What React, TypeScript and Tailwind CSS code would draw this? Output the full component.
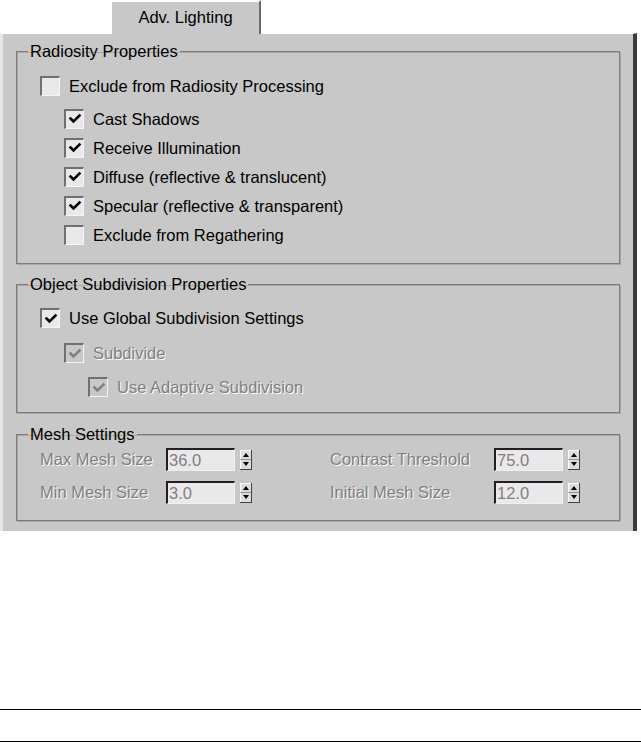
import React from "react";

// Adv. Lighting rollout — 3ds max style object properties tab

const FONT = "font-['Liberation_Sans',Arial,sans-serif]";

function CheckBox({ checked, disabled }: { checked: boolean; disabled?: boolean }) {
  return (
    <div
      className={`flex h-[20px] w-[20px] shrink-0 items-center justify-center border-l-2 border-t-2 border-b border-r border-l-[#707070] border-t-[#707070] border-b-[#f4f4f4] border-r-[#f4f4f4] ${
        disabled ? "bg-[#c8c8c8]" : "bg-[#ebe8eb]"
      }`}
    >
      {checked && (
        <svg width="14" height="14" viewBox="0 0 14 14">
          <polyline
            points="2.5,6.5 5.5,9.5 11.5,3.5"
            fill="none"
            stroke={disabled ? "#808080" : "#000"}
            strokeWidth="2.6"
            strokeLinecap="square"
          />
        </svg>
      )}
    </div>
  );
}

function CheckRow({
  label,
  checked,
  disabled,
  className = "",
}: {
  label: string;
  checked: boolean;
  disabled?: boolean;
  className?: string;
}) {
  return (
    <div className={`flex items-center gap-[9px] ${className}`}>
      <CheckBox checked={checked} disabled={disabled} />
      <span
        className={`whitespace-nowrap leading-[20px] ${
          disabled ? "text-[#808080] [text-shadow:1px_1px_0_#ffffff]" : "text-black"
        }`}
      >
        {label}
      </span>
    </div>
  );
}

function Spinner() {
  return (
    <div className="flex h-[20px] w-[12px] flex-col border-b border-r border-[#404040] bg-[#dcdcdc]">
      <div className="flex flex-1 items-center justify-center border-l border-t border-white">
        <div className="h-0 w-0 border-x-[3px] border-b-[4px] border-x-transparent border-b-black" />
      </div>
      <div className="flex flex-1 items-center justify-center border-l border-t border-white border-t-[#909090]">
        <div className="h-0 w-0 border-x-[3px] border-t-[4px] border-x-transparent border-t-black" />
      </div>
    </div>
  );
}

function NumField({ label, value, labelW }: { label: string; value: string; labelW: string }) {
  return (
    <div className="flex items-center">
      <span
        className={`${labelW} whitespace-nowrap text-[#808080] [text-shadow:1px_1px_0_#ffffff]`}
      >
        {label}
      </span>
      <div className="flex h-[23px] w-[69px] items-center border-l-2 border-t-2 border-b border-r border-l-[#202020] border-t-[#202020] border-b-[#f0f0f0] border-r-[#f0f0f0] bg-[#ebe8eb] pl-[1px] text-[#808080]">
        {value}
      </div>
      <div className="ml-[5px]">
        <Spinner />
      </div>
    </div>
  );
}

function Group({
  title,
  className = "",
  children,
}: {
  title: string;
  className?: string;
  children: React.ReactNode;
}) {
  return (
    <fieldset
      className={`mx-[13px] border border-[#7c7c7c] pl-[23px] shadow-[1px_1px_0_#a8a8a8,inset_1px_1px_0_#a8a8a8] ${className}`}
    >
      <legend className="-ml-[12px] px-[2px] leading-[18px] text-black">{title}</legend>
      {children}
    </fieldset>
  );
}

export default function App() {
  return (
    <div className={`h-[742px] w-[641px] bg-white text-[16.5px] ${FONT}`}>
      {/* tab strip */}
      <div className="flex h-[33px] pl-[110px]">
        <div className="relative z-10 flex h-[34px] w-[151px] items-center justify-center border-l-2 border-t-2 border-r-2 border-l-white border-t-white border-r-[#6a6a6a] bg-[#c8c8c8] pb-[2px] text-black">
          Adv. Lighting
        </div>
      </div>

      {/* panel */}
      <div className="h-[498px] w-[637px] border-l-[3px] border-t border-r-[4px] border-l-[#e6e6e6] border-t-white border-r-[#3c3c3c] bg-[#c8c8c8] pt-[8px]">
        <Group title="Radiosity Properties" className="pb-[14px] pt-[15px]">
          <CheckRow label="Exclude from Radiosity Processing" checked={false} className="h-[22px]" />
          <div className="mt-[7px] pl-[24px]">
            <CheckRow label="Cast Shadows" checked className="h-[29px]" />
            <CheckRow label="Receive Illumination" checked className="h-[29px]" />
            <CheckRow label="Diffuse (reflective & translucent)" checked className="h-[29px]" />
            <CheckRow label="Specular (reflective & transparent)" checked className="h-[29px]" />
            <CheckRow label="Exclude from Regathering" checked={false} className="h-[29px]" />
          </div>
        </Group>

        <Group title="Object Subdivision Properties" className="mt-[11px] pb-[14px] pt-[14px]">
          <CheckRow label="Use Global Subdivision Settings" checked className="h-[22px]" />
          <CheckRow label="Subdivide" checked disabled className="mt-[13px] h-[22px] pl-[24px]" />
          <CheckRow
            label="Use Adaptive Subdivision"
            checked
            disabled
            className="mt-[12px] h-[22px] pl-[48px]"
          />
        </Group>

        <Group title="Mesh Settings" className="mt-[12px] pb-[16px] pt-[5px]">
          <div className="flex h-[23px] items-center">
            <NumField label="Max Mesh Size" value="36.0" labelW="w-[126px]" />
            <div className="ml-[78px]">
              <NumField label="Contrast Threshold" value="75.0" labelW="w-[164px]" />
            </div>
          </div>
          <div className="mt-[10px] flex h-[23px] items-center">
            <NumField label="Min Mesh Size" value="3.0" labelW="w-[126px]" />
            <div className="ml-[78px]">
              <NumField label="Initial Mesh Size" value="12.0" labelW="w-[164px]" />
            </div>
          </div>
        </Group>
      </div>

      {/* rules below */}
      <div className="mt-[178px] border-t border-black" />
      <div className="mt-[31px] border-t border-black" />
    </div>
  );
}
